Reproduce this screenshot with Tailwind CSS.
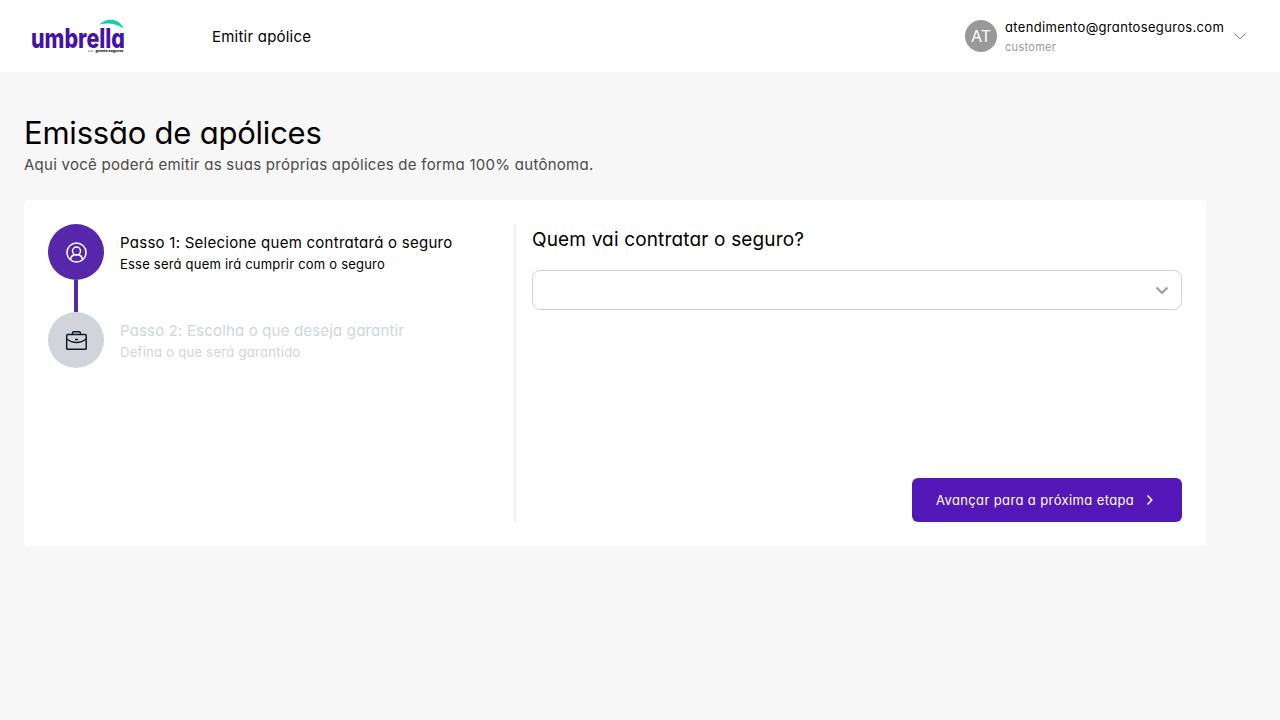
<!DOCTYPE html>
<html lang="pt-BR">
<head>
<meta charset="utf-8">
<title>Umbrella</title>
<script src="https://cdn.jsdelivr.net/npm/@tailwindcss/browser@4"></script>
</head>
<body class="h-screen overflow-hidden bg-[#f7f7f7] font-['Inter',sans-serif] [font-feature-settings:'cv11'] text-black">
<header class="flex h-18 items-center bg-white pl-8 pr-[33px]">
  <svg class="h-9 w-24 shrink-0 overflow-visible" viewBox="0 0 96 36">
    <path d="M67 6.500C75-.5 87 0 91.500 10.500C84 5 76 4.500 67 6.500Z" fill="#10cfaa"/>
    <text x="-1" y="29.500" font-size="27" font-weight="800" textLength="94" lengthAdjust="spacingAndGlyphs" fill="#4511a8">umbrella</text>
    <text x="56" y="33.500" font-size="3.600" textLength="6" lengthAdjust="spacingAndGlyphs" fill="#777">por</text>
    <text x="63.500" y="33.500" font-size="3.600" font-weight="800" textLength="28" lengthAdjust="spacingAndGlyphs" fill="#222">granto seguros</text>
  </svg>
  <nav class="ml-[84px] pt-0.5 text-[15px] tracking-[0.22px]">Emitir apólice</nav>
  <div class="ml-auto flex items-center">
    <div class="flex size-8 items-center justify-center rounded-full bg-[#999] text-base text-white">AT</div>
    <div class="ml-2 w-[220px] whitespace-nowrap pt-0.5">
      <div class="text-[13px] leading-5 tracking-[0.33px]">atendimento@grantoseguros.com</div>
      <div class="text-[11px] leading-5 tracking-[0.3px] text-[#999]">customer</div>
    </div>
    <svg class="ml-2 size-3.5" viewBox="0 0 14 14" fill="none" stroke="#808080"><path d="M1.500 4.500l5.500 5.500L12.500 4.500"/></svg>
  </div>
</header>
<main class="px-6 pt-[41px]">
  <h1 class="text-[31px] font-normal leading-10 tracking-[-0.22px]">Emissão de apólices</h1>
  <p class="text-[15px] font-normal leading-6 tracking-[0.27px] text-[#4b4b4b]">Aqui você poderá emitir as suas próprias apólices de forma 100% autônoma.</p>
  <section class="mt-[23px] flex h-[346px] w-[1182px] rounded bg-white p-6">
    <div class="w-[466px]">
      <div class="flex items-center gap-4">
        <div class="flex size-14 items-center justify-center rounded-full bg-[#5727ab]">
          <svg class="size-6" viewBox="0 0 24 24" fill="none" stroke="white" stroke-width="1.500"><circle cx="12.500" cy="12.500" r="9.500"/><circle cx="12.500" cy="11" r="4"/><path d="M6.500 19.500q.5-3.800 3.800-4.700h4.400q3.300.9 3.800 4.700"/></svg>
        </div>
        <div class="pb-px"><div class="pt-px text-[15px] leading-[23px] tracking-[0.26px]">Passo 1: Selecione quem contratará o seguro</div><div class="text-[13px] leading-5 tracking-[0.21px]">Esse será quem irá cumprir com o seguro</div></div>
      </div>
      <div class="ml-[26px] h-8 w-1 bg-[#5727ab]"></div>
      <div class="flex items-center gap-4 text-[#d1d5db]">
        <div class="flex size-14 items-center justify-center rounded-full bg-[#d1d5db]">
          <svg class="size-6" viewBox="0 0 24 24" fill="none" stroke="#111827" stroke-width="1.500"><rect x="2.700" y="6.500" width="19.500" height="14.800" rx=".8"/><path d="M8.500 6.500V5q0-1.200 1.200-1.200h5.500q1.200 0 1.200 1.200v1.500M3 11q4 3.500 9.500 3.500T22 11M11 11.500h3"/></svg>
        </div>
        <div class="pb-px"><div class="pt-px text-[15px] leading-[23px] tracking-[0.17px]">Passo 2: Escolha o que deseja garantir</div><div class="text-[13px] leading-5 tracking-[0.29px]">Defina o que será garantido</div></div>
      </div>
    </div>
    <div class="flex flex-1 flex-col border-l-2 border-[#efefef] pl-4">
      <h2 class="pt-0.5 text-[19px] leading-7 tracking-[0.16px]">Quem vai contratar o seguro?</h2>
      <div class="mt-4 flex h-10 items-center justify-end rounded-lg border border-[#d1d1db] pr-[11px]">
        <svg class="size-4" viewBox="0 0 16 16" fill="none" stroke="#9ca3af" stroke-width="2.300"><path d="M2.500 5.500L8 10.800l5.500-5.300"/></svg>
      </div>
      <button class="mt-auto flex h-11 w-[270px] items-center self-end rounded-md bg-[#5518b8] pl-6 text-[13px] tracking-[0.38px] text-white">
        <span class="w-[198px] whitespace-nowrap pt-0.5 text-left">Avançar para a próxima etapa</span>
        <svg class="ml-2.5 size-3" viewBox="0 0 12 12" fill="none" stroke="white" stroke-width="1.500"><path d="M3.500 1.500L7.800 6 3.500 10.500"/></svg>
      </button>
    </div>
  </section>
</main>
</body>
</html>
